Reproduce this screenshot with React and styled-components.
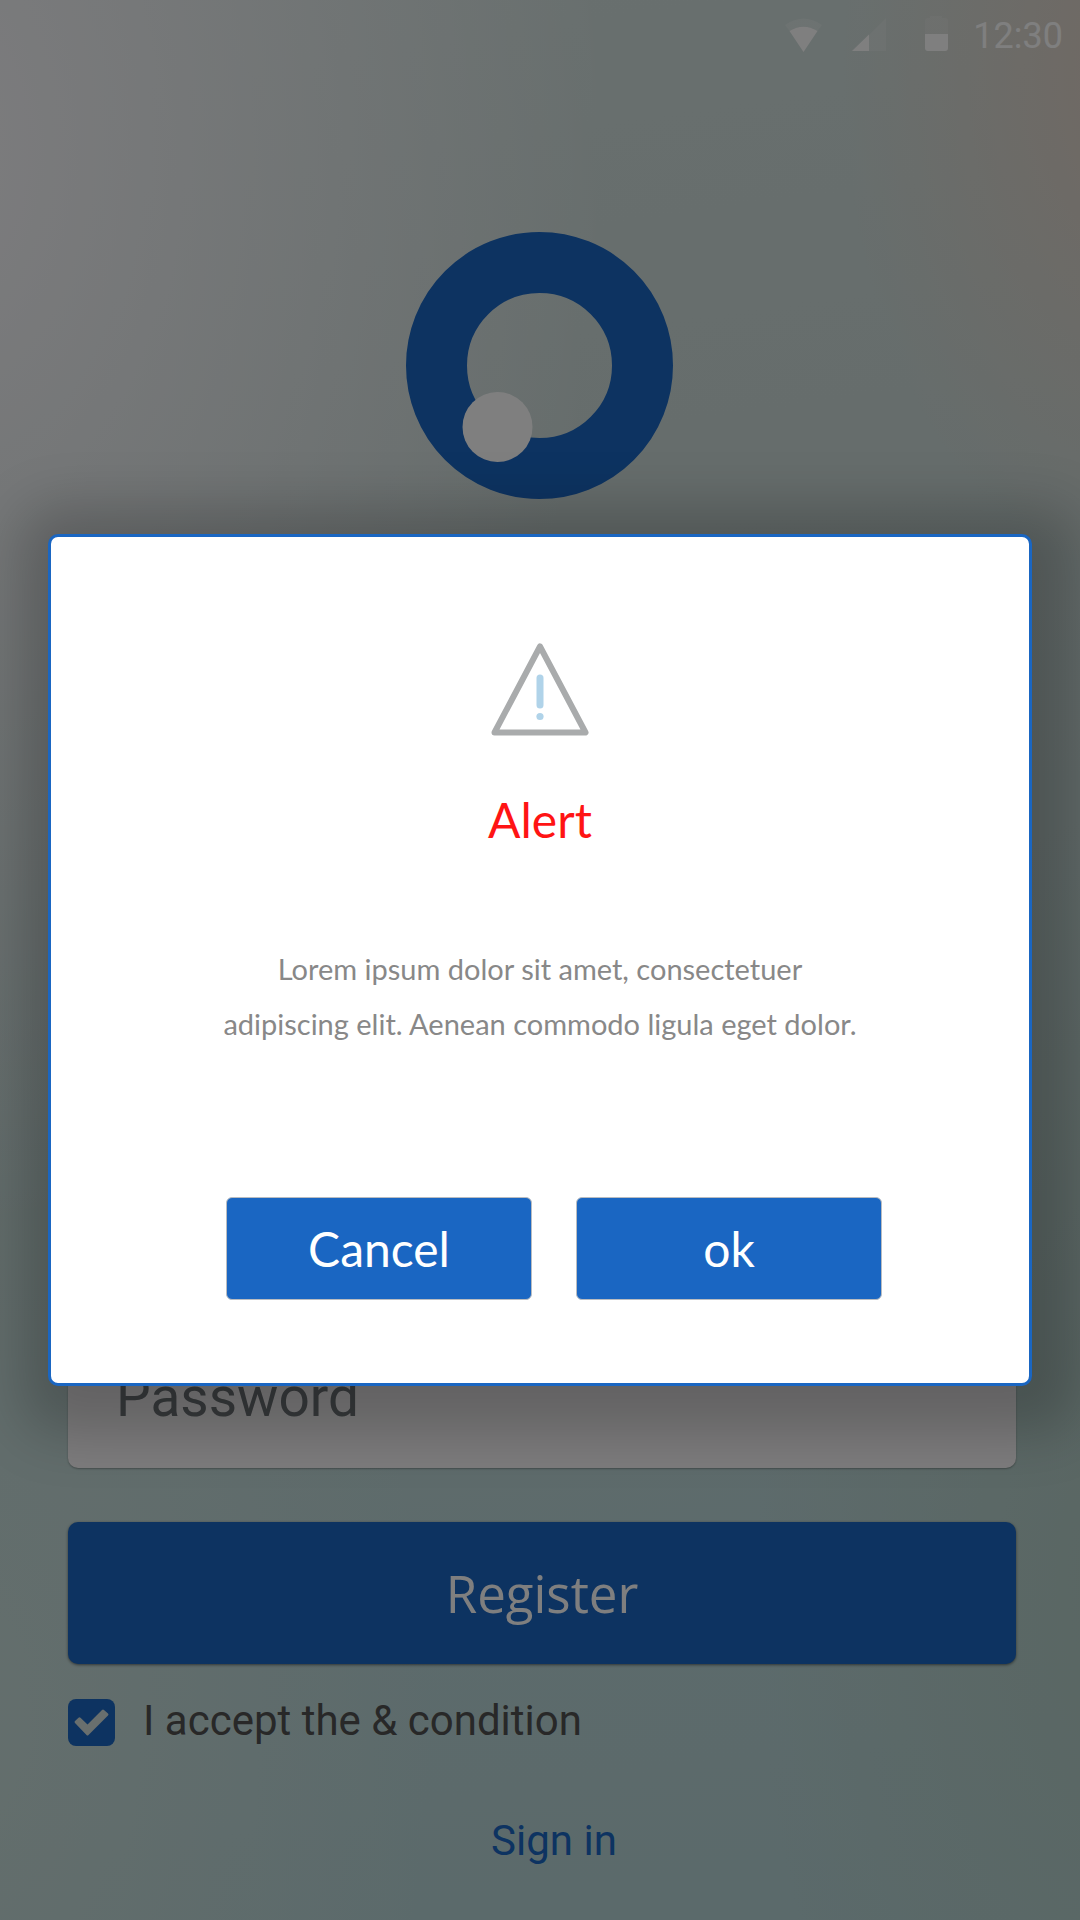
import React, { useState } from "react";
import styled, { createGlobalStyle } from "styled-components";

const GlobalStyle = createGlobalStyle`
  *, *::before, *::after { box-sizing: border-box; }
  body { margin: 0; font-family: Roboto, "Liberation Sans", sans-serif; }
`;

const blue = "#1a66c2";

const Screen = styled.div`
  display: grid;
  min-height: 100vh;
`;

const Page = styled.main`
  grid-area: 1 / 1;
  display: flex;
  flex-direction: column;
  background:
    radial-gradient(ellipse 28% 26% at 106% 4%, rgba(226, 208, 196, 0.95), rgba(226, 208, 196, 0) 100%),
    radial-gradient(ellipse 62% 56% at -6% 8%, rgba(252, 250, 254, 0.95), rgba(252, 250, 254, 0) 100%),
    radial-gradient(ellipse 36% 40% at 106% 82%, rgba(178, 202, 192, 0.8), rgba(178, 202, 192, 0) 100%),
    radial-gradient(ellipse 44% 40% at -4% 90%, rgba(202, 222, 218, 0.9), rgba(202, 222, 218, 0) 100%),
    linear-gradient(172deg, #d2e0de 0%, #ccdad8 30%, #c2d8d6 60%, #bad6d8 80%, #b6d4d6 100%);
`;

const StatusBar = styled.header`
  display: flex;
  align-items: center;
  justify-content: flex-end;
  height: 72px;
  padding: 0 17px;
  color: #fff;
`;

const StatusIcons = styled.svg`
  width: 164px;
  height: 40px;
  margin-right: 24px;
  fill: currentColor;
`;

const Clock = styled.time`
  font-size: 36px;
  line-height: 42px;
`;

const Brand = styled.div`
  flex: 1;
  display: flex;
  justify-content: center;
  align-items: flex-start;
  padding-top: 160px;
`;

const Logo = styled.svg`
  width: 268px;
  height: 268px;
`;

const Form = styled.form`
  display: flex;
  flex-direction: column;
  padding: 0 64px 54px 68px;
`;

const Field = styled.input`
  width: 100%;
  height: 142px;
  padding: 0 48px;
  border: 0;
  border-radius: 10px;
  background: #fbf9fb;
  box-shadow: 0 1px 2px rgba(0, 0, 0, 0.3);
  color: #71767a;
  font: 400 55px/64px Roboto, sans-serif;
  &::placeholder { color: #71767a; opacity: 1; }
`;

const RegisterButton = styled.button`
  height: 142px;
  margin-top: 54px;
  padding: 0;
  border: 0;
  border-radius: 10px;
  background: ${blue};
  box-shadow: 0 1px 3px rgba(0, 0, 0, 0.5);
  color: #fff;
  font: 400 51px/68px "Open Sans", sans-serif;
`;

const Terms = styled.label`
  display: flex;
  align-items: flex-start;
  gap: 28px;
  margin-top: 35px;
  color: #505050;
  font-size: 42px;
  line-height: 44px;
`;

const TickBox = styled.span`
  display: grid;
  width: 47px;
  height: 47px;
  flex: none;
`;

const Tick = styled.input`
  grid-area: 1 / 1;
  appearance: none;
  width: 100%;
  height: 100%;
  margin: 0;
  border-radius: 8px;
  background: ${blue};
`;

const TickMark = styled.svg`
  grid-area: 1 / 1;
  width: 47px;
  height: 47px;
  z-index: 0;
  pointer-events: none;
  fill: #d2dedc;
`;

const SignIn = styled.a`
  align-self: center;
  margin: 70px 0 0 24px;
  color: ${blue};
  font-size: 42px;
  line-height: 50px;
  text-decoration: none;
`;

const Overlay = styled.div`
  grid-area: 1 / 1;
  z-index: 1;
  display: flex;
  align-items: center;
  padding: 48px;
  background: rgba(0, 0, 0, 0.5);
  overflow: hidden;
`;

const Dialog = styled.section`
  flex: 1;
  display: flex;
  flex-direction: column;
  align-items: center;
  padding: 106px 40px 83px;
  border: 3px solid ${blue};
  border-radius: 10px;
  background: #fff;
  box-shadow: 10px 10px 56px 36px rgba(0, 0, 0, 0.21);
  font-family: Lato, "Open Sans", sans-serif;
`;

const WarningIcon = styled.svg`
  width: 98px;
  height: 93px;
  fill: none;
  stroke-linecap: round;
  stroke-linejoin: round;
`;

const Title = styled.h1`
  margin: 55px 0 0;
  color: #ff1414;
  font-size: 48px;
  font-weight: 400;
  line-height: 58px;
`;

const Message = styled.p`
  max-width: 700px;
  margin: 92px 0 0;
  color: #888;
  font-size: 29px;
  line-height: 55px;
  text-align: center;
`;

const Actions = styled.div`
  display: flex;
  gap: 44px;
  margin-top: 146px;
  padding-left: 28px;
`;

const ActionButton = styled.button`
  width: 306px;
  height: 103px;
  padding: 0;
  border: 1px solid #b9bcc0;
  border-radius: 6px;
  background: ${blue};
  color: #fff;
  font: 400 48px/58px Lato, "Open Sans", sans-serif;
`;

export default function App() {
  const [accepted, setAccepted] = useState(true);

  return (
    <>
      <GlobalStyle />
      <Screen>
        <Page>
          <StatusBar>
            <StatusIcons viewBox="0 -4 164 40" aria-hidden="true">
              <path opacity="0.22" d="M0 5 Q18.500 -8 37 5 L32.500 11 Q18.500 2.500 4.500 11Z" />
              <path d="M4.500 11 Q18.500 2.500 32.500 11 L18.500 32Z" />
              <path opacity="0.2" d="M101 -2 V31 H84 V15Z" />
              <path d="M67 31 L84 14.500 V31Z" />
              <path opacity="0.15" d="M140 14 V1 Q140 -2 143 -2 H145 V-4 H157 V-2 H160 Q163 -2 163 1 V14Z" />
              <path d="M140 14 H163 V28 Q163 31 160 31 H143 Q140 31 140 28Z" />
            </StatusIcons>
            <Clock>12:30</Clock>
          </StatusBar>

          <Brand>
            <Logo viewBox="0 0 268 268" aria-hidden="true">
              <circle cx="133.500" cy="133.500" r="103" fill="none" stroke={blue} strokeWidth="61" />
              <circle cx="91.500" cy="195" r="35" fill="#fff" />
            </Logo>
          </Brand>

          <Form onSubmit={(e) => e.preventDefault()}>
            <Field type="password" placeholder="Password" aria-label="Password" />
            <RegisterButton type="submit">Register</RegisterButton>
            <Terms>
              <TickBox>
                <Tick
                  type="checkbox"
                  checked={accepted}
                  onChange={(e) => setAccepted(e.target.checked)}
                />
                {accepted && (
                  <TickMark viewBox="0 0 47 47" aria-hidden="true">
                    <path d="M7 22 L10.500 18.700 Q11.500 17.800 12.500 18.800 L19.500 25.500 L34 11 Q35 10 36 11 L40 14.500 Q41 15.500 40 16.500 L20.500 36 Q19.500 37 18.500 36 L7 24 Q6 23 7 22Z" />
                  </TickMark>
                )}
              </TickBox>
              I accept the &amp; condition
            </Terms>
            <SignIn href="#sign-in">Sign in</SignIn>
          </Form>
        </Page>

        <Overlay>
          <Dialog role="alertdialog" aria-modal="true" aria-labelledby="alert-title" aria-describedby="alert-text">
            <WarningIcon viewBox="0 0 98 93" aria-hidden="true">
              <path d="M49 3.500 L94.500 89.500 H3.500Z" stroke="#a9abac" strokeWidth="6" />
              <path d="M49 35 V62" stroke="#b0d3e9" strokeWidth="7" />
              <circle cx="49" cy="73.500" r="3.600" fill="#b0d3e9" />
            </WarningIcon>
            <Title id="alert-title">Alert</Title>
            <Message id="alert-text">
              Lorem ipsum dolor sit amet, consectetuer
              <br />
              adipiscing elit. Aenean commodo ligula eget dolor.
            </Message>
            <Actions>
              <ActionButton type="button">Cancel</ActionButton>
              <ActionButton type="button">ok</ActionButton>
            </Actions>
          </Dialog>
        </Overlay>
      </Screen>
    </>
  );
}
